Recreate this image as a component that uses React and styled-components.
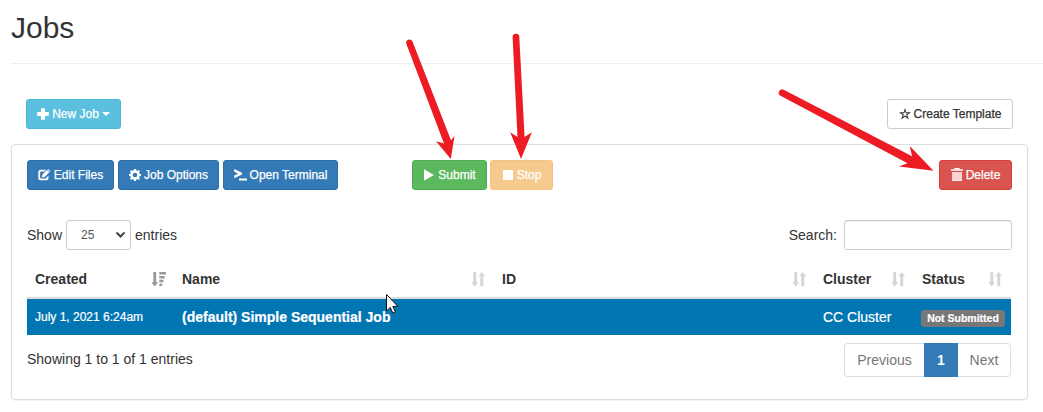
import React from 'react';
import styled, { createGlobalStyle, css } from 'styled-components';

const GlobalStyle = createGlobalStyle`
  *, *::before, *::after { box-sizing: border-box; }
  body {
    margin: 0;
    background: #fff;
    color: #333;
    font: 14px/20px "Liberation Sans", Arial, sans-serif;
    overflow: hidden;
  }
`;

const Page = styled.main`
  position: relative;
  width: 1043px;
  height: 412px;
  padding-left: 11px;
`;

const Header = styled.header`
  height: 64px;
  padding-top: 11px;
  border-bottom: 1px solid #eee;
`;

const Title = styled.h1`
  margin: 0;
  font-size: 30px;
  font-weight: 400;
  line-height: 33px;
`;

const TopBar = styled.div`
  display: flex;
  justify-content: space-between;
  padding: 35px 30px 15px 15px;
`;

const tones = {
  info: css`background: #5bc0de; border-color: #46b8da;`,
  primary: css`background: #337ab7; border-color: #2e6da4;`,
  success: css`background: #5cb85c; border-color: #4cae4c;`,
  warning: css`background: #f6ca8e; border-color: #f5c37e;`,
  danger: css`background: #d9534f; border-color: #d43f3a;`,
  plain: css`background: #fff; border-color: #ccc; color: #333;`,
};

const Button = styled.button`
  display: flex;
  align-items: center;
  justify-content: center;
  gap: 3px;
  flex: none;
  width: ${(p) => p.$width}px;
  height: 30px;
  padding: 0;
  border: 1px solid;
  border-radius: 3px;
  color: #fff;
  font: 12px/18px "Liberation Sans", Arial, sans-serif;
  white-space: nowrap;
  ${(p) => tones[p.$tone]}
`;

const Label = styled.span`
  -webkit-text-stroke: 0.25px currentColor;
`;

const Caret = styled.span`
  border: 4px solid transparent;
  border-top-color: currentColor;
  border-bottom: 0;
`;

const Glyph = styled.svg`
  display: block;
  flex: none;
  fill: currentColor;
`;

const Panel = styled.section`
  width: 1017px;
  height: 256px;
  padding: 15px;
  border: 1px solid #ddd;
  border-radius: 4px;
  box-shadow: 0 1px 1px rgba(0, 0, 0, 0.05);
`;

const Toolbar = styled.div`
  display: flex;
  justify-content: space-between;
`;

const Group = styled.div`
  display: flex;
  gap: ${(p) => p.$gap}px;
  margin-right: ${(p) => p.$after || 0}px;
`;

const Filters = styled.div`
  display: flex;
  justify-content: space-between;
  margin-top: 30px;
`;

const Field = styled.label`
  display: flex;
  align-items: center;
  height: 30px;
  gap: ${(p) => p.$gap}px;
`;

const SelectBox = styled.span`
  display: flex;
  align-items: center;
  justify-content: space-between;
  width: 65px;
  height: 30px;
  padding: 0 4px 0 14px;
  border: 1px solid #ccc;
  border-radius: 3px;
  color: #555;
  font-size: 12px;
`;

const SearchInput = styled.input`
  width: 168px;
  height: 30px;
  border: 1px solid #ccc;
  border-radius: 3px;
  box-shadow: inset 0 1px 1px rgba(0, 0, 0, 0.075);
`;

const Table = styled.table`
  width: 984px;
  margin-top: 11px;
  border-collapse: separate;
  border-spacing: 0;
  table-layout: fixed;
`;

const HeadCell = styled.th`
  width: ${(p) => p.$width}px;
  height: 38px;
  padding: 0 8px;
  border-bottom: 2px solid #ddd;
  text-align: left;
`;

const HeadContent = styled.div`
  display: flex;
  align-items: center;
  justify-content: space-between;
`;

const Cell = styled.td`
  height: 36px;
  padding: 0 8px;
  background: #0275b3;
  color: #fff;
  font-size: ${(p) => (p.$small ? 12 : 14)}px;
  font-weight: ${(p) => (p.$bold ? 700 : 400)};
  white-space: nowrap;
  -webkit-text-stroke: 0.2px currentColor;
`;

const Badge = styled.span`
  display: block;
  width: 84px;
  height: 17px;
  margin: 2px 0 0 -1px;
  border-radius: 3px;
  background: #777;
  color: #fff;
  font-size: 10.5px;
  font-weight: 700;
  line-height: 17px;
  text-align: center;
`;

const Footer = styled.footer`
  display: flex;
  justify-content: space-between;
  width: 984px;
  padding-top: 8px;
`;

const Info = styled.div`
  padding-top: 6px;
`;

const Pager = styled.nav`
  display: flex;
  height: 34px;
`;

const PageItem = styled.span`
  width: ${(p) => p.$width}px;
  border: 1px solid #ddd;
  border-width: ${(p) => (p.$active ? '1px' : p.$last ? '1px 1px 1px 0' : '1px 0 1px 1px')};
  border-color: ${(p) => (p.$active ? '#337ab7' : '#ddd')};
  border-radius: ${(p) => (p.$active ? '0' : p.$last ? '0 4px 4px 0' : '4px 0 0 4px')};
  background: ${(p) => (p.$active ? '#337ab7' : '#fff')};
  color: ${(p) => (p.$active ? '#fff' : '#777')};
  font-weight: ${(p) => (p.$active ? 700 : 400)};
  line-height: 32px;
  text-align: center;
`;

const Annotations = styled.svg`
  position: absolute;
  left: 0;
  top: 0;
  pointer-events: none;
`;

const icons = {
  plus: <path d="M4 .3h4V4h3.800v4H8v3.700H4V8H.2V4H4z" />,
  edit: (
    <>
      <path d="M8 .8H2.800Q.3.800.3 3.300v5.400q0 2.500 2.500 2.500H8q2.500 0 2.500-2.500V6.500L8.600 8.400q0 1-.9 1H3.100q-1 0-1-1V3.600q0-1 1-1h3.100z" />
      <path d="M3.800 8.600l.6-3.100L8.900 1l2.400 2.300-4.600 4.600zM9.500.6l.6-.6 2.400 2.300-.6.6z" />
    </>
  ),
  gear: (
    <path
      fillRule="evenodd"
      d="M5 0h2l.3 1.600 1 .4L9.600 1.100 11 2.500l-.9 1.300.4 1L12 5v2l-1.500.300-.4 1L11 9.600 9.600 11l-1.300-.9-1 .4L7 12H5l-.300-1.500-1-.4L2.400 11 1 9.600l.9-1.300-.4-1L0 7V5l1.500-.200.4-1L1 2.500 2.400 1.100l1.300.9 1-.4zM6 3.700a2.300 2.300 0 1 0 0 4.600 2.300 2.300 0 0 0 0-4.600z"
    />
  ),
  terminal: <path d="M.2 0L8 3.800v1.800L.2 9.200V6.600L4.200 4.700.2 2.700zM5 9.600h8v2H5z" />,
  play: <path d="M1 .3v11.400L11 6z" />,
  stop: <path d="M1 1h10v10H1z" />,
  star: (
    <path
      fillRule="evenodd"
      d="M6 0l1.400 4.200H12L8.300 6.900l1.500 4.600L6 8.700l-3.800 2.800 1.500-4.600L0 4.200h4.600zM6 2.800l-.7 2.400H3l1.900 1.400-.8 2.200L6 7.400l1.900 1.400-.8-2.200L9 5.200H6.700z"
    />
  ),
  trash: (
    <>
      <path d="M3.500 1.300V0h5v1.300H12v1.500H0V1.300zM4.600 1v.3h2.800V1z" fillRule="evenodd" />
      <path d="M1 4h10v9H1z" opacity=".75" />
      <path d="M1 12h10v1H1z" opacity=".5" />
    </>
  ),
};

const Icon = ({ name, width = 12, height = 12 }) => (
  <Glyph width={width} height={height} viewBox={`0 0 ${width} ${height}`} aria-hidden="true">
    {icons[name]}
  </Glyph>
);

const SortIcon = ({ active }) => (
  <Glyph width="15" height="15" viewBox="0 0 15 15" color={active ? '#999' : '#d6d6d6'}>
    <path d="M2.300 0h2.900v10.200h2L3.750 14.500.3 10.200h2z" />
    {active ? (
      <path d="M8.300 0H15v2.600H8.300zM8.300 3.900h5.400v2.500H8.300zM8.300 7.700h4.200v2.500H8.300zM8.300 11.400h2.900v2.500H8.300z" />
    ) : (
      <path d="M9.300 14.300h2.900V4.300h2L10.750 0 7.300 4.300h2z" />
    )}
  </Glyph>
);

const columns = [
  { name: 'Created', width: 147, active: true },
  { name: 'Name', width: 320 },
  { name: 'ID', width: 321 },
  { name: 'Cluster', width: 99 },
  { name: 'Status', width: 97 },
];

const arrows = [
  'M406.400 43.900A3.250 3.250 0 0 1 412.500 41.600L451 140.200 454.500 136 450.800 159 436 141.200 444 143.500Z',
  'M512.600 37.300A3.300 3.300 0 0 1 519.300 37.100L524.600 137 531.900 132.200 521 159 510.200 132.200 517.500 137Z',
  'M780.500 95.700A3.250 3.250 0 0 1 783.700 89.800L912.100 156.300 909.700 146 933.500 170.800 899 166.600 907.500 163.300Z',
];

export default function App() {
  return (
    <>
      <GlobalStyle />
      <Page>
        <Header>
          <Title>Jobs</Title>
        </Header>
        <TopBar>
          <Button $tone="info" $width={95}>
            <Icon name="plus" />
            <Label>New Job</Label>
            <Caret />
          </Button>
          <Button $tone="plain" $width={126}>
            <Icon name="star" />
            <Label>Create Template</Label>
          </Button>
        </TopBar>
        <Panel>
          <Toolbar>
            <Group $gap={4}>
              <Button $tone="primary" $width={87}><Icon name="edit" width={13} /><Label>Edit Files</Label></Button>
              <Button $tone="primary" $width={101}><Icon name="gear" /><Label>Job Options</Label></Button>
              <Button $tone="primary" $width={115}><Icon name="terminal" width={13} /><Label>Open Terminal</Label></Button>
            </Group>
            <Group $gap={3} $after={312}>
              <Button $tone="success" $width={75}><Icon name="play" /><Label>Submit</Label></Button>
              <Button $tone="warning" $width={63}><Icon name="stop" /><Label>Stop</Label></Button>
            </Group>
            <Button $tone="danger" $width={73}><Icon name="trash" height={14} /><Label>Delete</Label></Button>
          </Toolbar>
          <Filters>
            <Field $gap={4}>
              Show
              <SelectBox>
                25
                <Glyph width="11" height="8" viewBox="0 0 11 8">
                  <path d="M1.500 1.500l4 4 4-4" fill="none" stroke="#444" strokeWidth="2" />
                </Glyph>
              </SelectBox>
              entries
            </Field>
            <Field $gap={7}>
              Search:
              <SearchInput type="search" />
            </Field>
          </Filters>
          <Table>
            <thead>
              <tr>
                {columns.map((c) => (
                  <HeadCell key={c.name} $width={c.width}>
                    <HeadContent>
                      {c.name}
                      <SortIcon active={c.active} />
                    </HeadContent>
                  </HeadCell>
                ))}
              </tr>
            </thead>
            <tbody>
              <tr>
                <Cell $small>July 1, 2021 6:24am</Cell>
                <Cell $bold>(default) Simple Sequential Job</Cell>
                <Cell />
                <Cell>CC Cluster</Cell>
                <Cell><Badge>Not Submitted</Badge></Cell>
              </tr>
            </tbody>
          </Table>
          <Footer>
            <Info>Showing 1 to 1 of 1 entries</Info>
            <Pager>
              <PageItem $width={80}>Previous</PageItem>
              <PageItem $width={34} $active>1</PageItem>
              <PageItem $width={53} $last>Next</PageItem>
            </Pager>
          </Footer>
        </Panel>
        <Annotations width="1043" height="412" viewBox="0 0 1043 412">
          {arrows.map((d) => <path key={d} d={d} fill="#ed1c24" />)}
          <path
            d="M386.500 294.500v16.500l3.700-3.600 2.700 5.700 2.500-1.200-2.600-5.500h5.100z"
            fill="#fff"
            stroke="#111"
          />
        </Annotations>
      </Page>
    </>
  );
}
